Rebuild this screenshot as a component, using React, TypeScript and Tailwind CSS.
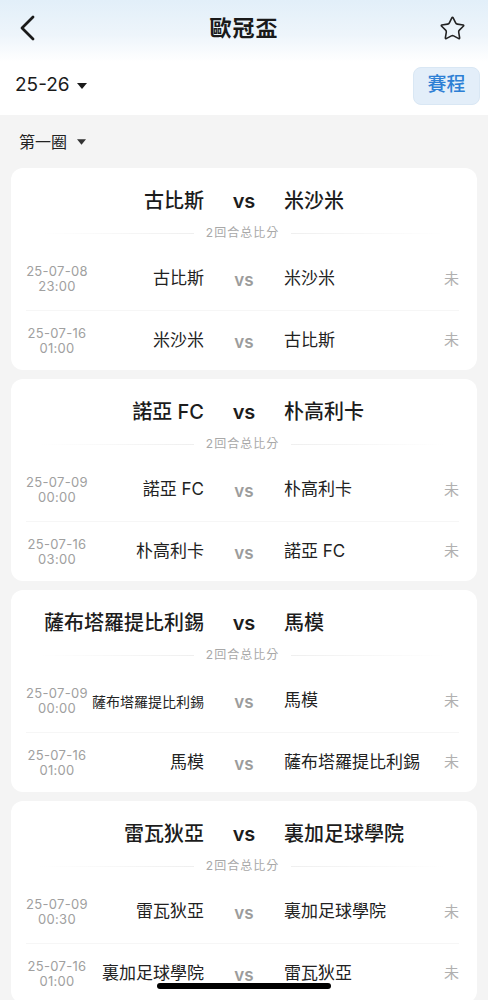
import { Star } from 'lucide-react'

type Leg = { date: string; time: string; home: string; away: string; homeSmall?: boolean }
type Tie = { home: string; away: string; legs: Leg[] }

const ties: Tie[] = [
  {
    home: '古比斯',
    away: '米沙米',
    legs: [
      { date: '25-07-08', time: '23:00', home: '古比斯', away: '米沙米' },
      { date: '25-07-16', time: '01:00', home: '米沙米', away: '古比斯' },
    ],
  },
  {
    home: '諾亞 FC',
    away: '朴高利卡',
    legs: [
      { date: '25-07-09', time: '00:00', home: '諾亞 FC', away: '朴高利卡' },
      { date: '25-07-16', time: '03:00', home: '朴高利卡', away: '諾亞 FC' },
    ],
  },
  {
    home: '薩布塔羅提比利錫',
    away: '馬模',
    legs: [
      { date: '25-07-09', time: '00:00', home: '薩布塔羅提比利錫', away: '馬模', homeSmall: true },
      { date: '25-07-16', time: '01:00', home: '馬模', away: '薩布塔羅提比利錫' },
    ],
  },
  {
    home: '雷瓦狄亞',
    away: '裏加足球學院',
    legs: [
      { date: '25-07-09', time: '00:30', home: '雷瓦狄亞', away: '裏加足球學院' },
      { date: '25-07-16', time: '01:00', home: '裏加足球學院', away: '雷瓦狄亞' },
    ],
  },
]

function Caret({ className }: { className?: string }) {
  return (
    <svg viewBox="0 0 10 6" className={className}>
      <path d="M0 0h10L5 6z" fill="currentColor" />
    </svg>
  )
}

function TieCard({ tie }: { tie: Tie }) {
  return (
    <div className="bg-white rounded-[12px] pt-[18px] pl-[15px] pr-[18px]">
      {/* 总比分 */}
      <div className="flex items-center h-[30px] text-[20px] font-medium text-[#1c1c1c]">
        <div className="w-[178px] text-right whitespace-nowrap">{tie.home}</div>
        <div className="w-[80px] text-center font-semibold">vs</div>
        <div className="flex-1 whitespace-nowrap">{tie.away}</div>
      </div>
      <div className="flex items-center mt-[9px] h-4 px-[14px]">
        <div className="flex-1 h-px bg-[linear-gradient(to_right,rgba(240,240,240,0),#efefef)]" />
        <span className="px-3 text-[12px] leading-4 text-[#a8a8a8] tracking-[1px]">2回合总比分</span>
        <div className="flex-1 h-px bg-[linear-gradient(to_left,rgba(240,240,240,0),#efefef)]" />
      </div>
      <div className="mt-[7px]">
        {tie.legs.map((leg, i) => (
          <div
            key={i}
            className={`flex items-center ${i > 0 ? 'h-[60px] border-t border-[#f6f6f6]' : 'h-[62px]'}`}
          >
            <div className="w-[62px] text-center text-[13px] leading-[15px] text-[#a0a0a0] tracking-[0.3px]">
              <div>{leg.date}</div>
              <div>{leg.time}</div>
            </div>
            <div
              className={`w-[116px] text-right whitespace-nowrap text-[#222] ${leg.homeSmall ? 'text-[14px]' : 'text-[17px]'}`}
            >
              {leg.home}
            </div>
            <div className="w-[80px] text-center text-[17px] font-semibold text-[#9c9c9c] pt-1">vs</div>
            <div className="flex-1 whitespace-nowrap text-[17px] text-[#222]">{leg.away}</div>
            <div className="text-[15px] text-[#b0b0b0]">未</div>
          </div>
        ))}
      </div>
    </div>
  )
}

export default function App() {
  return (
    <div className="min-h-screen bg-[#f4f4f4] font-['Inter','Noto_Sans_CJK_TC',sans-serif]">
      {/* 顶部 */}
      <div className="bg-[linear-gradient(to_bottom,#e2eff9_0px,#eef5fb_35px,#ffffff_62px)]">
        <div className="relative flex items-center justify-between h-[56px] px-[18px]">
          <svg viewBox="0 0 20 28" className="w-[20px] h-[28px] text-[#1a1a1a]">
            <path d="M15 3L4 14l11 11" fill="none" stroke="currentColor" strokeWidth="2.8" strokeLinecap="round" strokeLinejoin="round" />
          </svg>
          <h1 className="absolute left-1/2 -translate-x-1/2 text-[22px] font-bold text-[#1a1a1a] tracking-[1px]">歐冠盃</h1>
          <Star size={27} strokeWidth={1.4} className="text-[#222] mr-[4px]" />
        </div>
        <div className="flex items-center justify-between h-[59px] pl-[15px] pr-[8px]">
          <div className="flex items-center gap-[7px] text-[19px] text-[#1a1a1a]">
            <span>25-26</span>
            <Caret className="w-[10px] h-[6px] text-[#1a1a1a]" />
          </div>
          <button className="w-[67px] h-[38px] rounded-[8px] bg-[#e3eef9] border border-[#d9e7f4] text-[19px] font-medium text-[#2d7fd5]">
            賽程
          </button>
        </div>
      </div>

      {/* 轮次 */}
      <div className="flex items-center h-[53px] pl-[19px] gap-[10px] text-[16px] text-[#222]">
        <span>第一圈</span>
        <Caret className="w-[9px] h-[6px] text-[#333]" />
      </div>

      <div className="flex flex-col gap-[9px] px-[11px] pb-4">
        {ties.map((t, i) => (
          <TieCard key={i} tie={t} />
        ))}
      </div>

      <div className="fixed bottom-[11px] left-1/2 -translate-x-1/2 w-[174px] h-[6px] rounded-full bg-black" />
    </div>
  )
}
